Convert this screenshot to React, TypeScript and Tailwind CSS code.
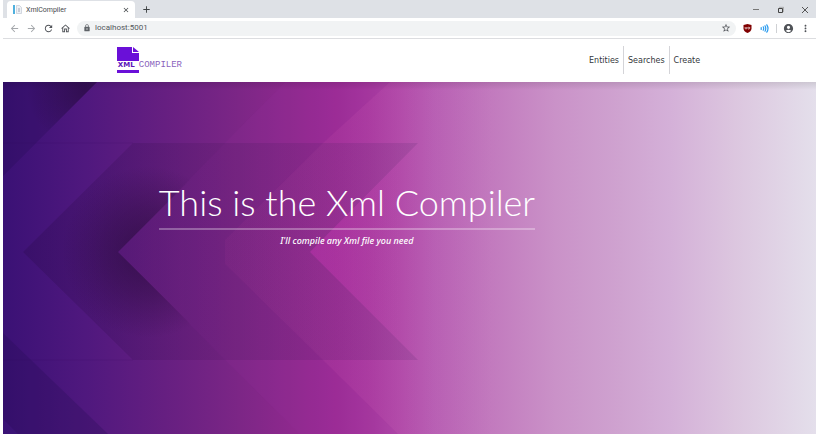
import type { ReactNode } from "react";
import {
  MdArrowBack,
  MdArrowForward,
  MdRefresh,
  MdOutlineHome,
  MdLock,
  MdStarBorder,
  MdAccountCircle,
  MdMoreVert,
  MdClose,
  MdAdd,
} from "react-icons/md";

function IconButton({ label, className = "", children }: { label: string; className?: string; children: ReactNode }) {
  return (
    <button type="button" aria-label={label} className={`flex shrink-0 items-center justify-center ${className}`}>
      {children}
    </button>
  );
}

function TabStrip() {
  return (
    <div className="flex h-[18px] items-end bg-[#dee1e6] pl-1">
      <div className="flex h-[17px] w-[128px] items-center rounded-t bg-white pr-[5px] pl-[6px]">
        <svg className="mr-1 h-[9px] w-[9px] shrink-0" viewBox="0 0 9 9" aria-hidden="true">
          <rect x="0" y="0" width="2" height="9" fill="#4fb0de" />
          <path d="M3.5 .5h3l2 2v6h-5z" fill="#eef1f5" stroke="#c3c9d4" strokeWidth=".7" />
          <path d="M5 4h2M5 6h2" stroke="#8d97a8" strokeWidth=".8" />
        </svg>
        <span className="grow font-['Roboto',sans-serif] text-[7px] leading-[10px] text-[#45494d]">XmlCompiler</span>
        <IconButton label="Close tab">
          <MdClose size={8} color="#3c4043" />
        </IconButton>
      </div>
      <IconButton label="New tab" className="ml-[6px] h-[17px]">
        <MdAdd size={11} color="#3c4043" />
      </IconButton>
      <div className="ml-auto flex h-[17px] items-center gap-[17px] pr-[7px]">
        <IconButton label="Minimise">
          <svg width="8" height="8" viewBox="0 0 8 8">
            <path d="M1 3.5h6" stroke="#777" />
          </svg>
        </IconButton>
        <IconButton label="Maximise">
          <svg width="7" height="8" viewBox="0 0 7 8">
            <path d="M1.500 2.500h4v4h-4z" fill="none" stroke="#444" />
            <path d="M2 1.300h4.600V6" fill="none" stroke="#888" strokeWidth=".6" />
          </svg>
        </IconButton>
        <IconButton label="Close window">
          <svg width="8" height="8" viewBox="0 0 8 8">
            <path d="M1 1l6 6M7 1L1 7" stroke="#444" strokeWidth=".9" />
          </svg>
        </IconButton>
      </div>
    </div>
  );
}

function Toolbar() {
  return (
    <div className="flex h-[21px] items-center border-b border-[#dcdde0] bg-white pr-[5px] pl-[6px]">
      <div className="flex gap-[6px]">
        <IconButton label="Back">
          <MdArrowBack size={11} color="#a5a8ac" />
        </IconButton>
        <IconButton label="Forward">
          <MdArrowForward size={11} color="#a5a8ac" />
        </IconButton>
        <IconButton label="Reload">
          <MdRefresh size={11} color="#505358" />
        </IconButton>
        <IconButton label="Home">
          <MdOutlineHome size={11} color="#505358" />
        </IconButton>
      </div>
      <div className="ml-[6px] flex h-[15px] grow items-center rounded-full bg-[#f1f3f4] pr-[5px] pl-[6px]">
        <MdLock size={8} color="#5f6368" />
        <input
          aria-label="Address"
          defaultValue="localhost:5001"
          className="ml-1 min-w-0 grow bg-transparent font-['Roboto',sans-serif] text-[8px] leading-[12px] text-[#54585c] outline-none"
        />
        <IconButton label="Bookmark">
          <MdStarBorder size={10} color="#505358" />
        </IconButton>
      </div>
      <IconButton label="uBlock" className="ml-[7px]">
        <svg width="9" height="9" viewBox="0 0 9 9">
          <path d="M4.5 0L8.5 1v3.500c0 2-1.700 3.500-4 4.500c-2.300-1-4-2.500-4-4.500V1z" fill="#800000" />
          <path d="M2.200 3v1.300q0 .7 .8 .7t.8-.7V3M5.800 3.200a.9.9 0 1 0 .1 0" fill="none" stroke="#fff" strokeWidth=".7" />
        </svg>
      </IconButton>
      <IconButton label="Read aloud" className="ml-[8px]">
        <svg width="9" height="9" viewBox="0 0 9 9" fill="none" stroke="#2a9bee" strokeWidth="1.200" strokeLinecap="round">
          <path d="M1.200 3.500v2M3.200 2.800q1 1.700 0 3.400M5 1.800q1.500 2.700 0 5.400M6.800 .8q2.400 3.700 0 7.400" />
        </svg>
      </IconButton>
      <span className="ml-[7px] h-[9px] w-px bg-[#cfd1d4]" />
      <IconButton label="Profile" className="ml-[6px]">
        <MdAccountCircle size={11} color="#505358" />
      </IconButton>
      <IconButton label="Menu" className="ml-[6px]">
        <MdMoreVert size={11} color="#505358" />
      </IconButton>
    </div>
  );
}

function Logo() {
  return (
    <a href="#home" className="flex items-end">
      <span className="flex w-[22px] flex-col">
        <svg className="h-[14px] w-[22px]" viewBox="0 0 22 14" aria-hidden="true">
          <path d="M0 0h15v6h7v8H0z" fill="#6a10d8" />
          <path d="M16 0l6 5h-6z" fill="#6a10d8" />
        </svg>
        <span className="pl-px font-['DejaVu_Sans',sans-serif] text-[7px] leading-[9px] font-bold text-[#5b12b8]">XML</span>
        <span className="h-[3px] bg-[#6a10d8]" />
      </span>
      <span className="mb-[3px] font-['Liberation_Mono',monospace] text-[9px] leading-[9px] text-[#8a63bd]">COMPILER</span>
    </a>
  );
}

function SiteHeader() {
  return (
    <header className="bg-white pt-[7px] pb-2">
      <div className="mx-auto flex w-[72%] items-center justify-between">
        <Logo />
        <nav className="flex divide-x divide-[#d4d4d8] font-['DejaVu_Sans',sans-serif] text-[8px] leading-[26px] text-[#34373b]">
          <a href="#entities" className="px-1 pt-[2px]">
            Entities
          </a>
          <a href="#searches" className="px-1 pt-[2px]">
            Searches
          </a>
          <a href="#create" className="pt-[2px] pr-[2px] pl-1">
            Create
          </a>
        </nav>
      </div>
    </header>
  );
}

/* Layered chevrons over a horizontal indigo-to-lilac gradient. */
function HeroBackdrop() {
  return (
    <svg className="absolute inset-0 h-full w-full" viewBox="0 0 813 352" preserveAspectRatio="none" aria-hidden="true">
      <defs>
        <linearGradient id="base" gradientUnits="userSpaceOnUse" x1="0" x2="813" y1="0" y2="0">
          <stop offset="0" stopColor="#3a1175" />
          <stop offset=".1" stopColor="#4f187e" />
          <stop offset=".2" stopColor="#661f81" />
          <stop offset=".29" stopColor="#7c2686" />
          <stop offset=".36" stopColor="#8f298e" />
          <stop offset=".41" stopColor="#9c2c95" />
          <stop offset=".45" stopColor="#a5379d" />
          <stop offset=".49" stopColor="#b04aa8" />
          <stop offset=".53" stopColor="#b75fb3" />
          <stop offset=".6" stopColor="#c27abe" />
          <stop offset=".68" stopColor="#ca92c8" />
          <stop offset=".76" stopColor="#cfa3d0" />
          <stop offset=".82" stopColor="#d4b0d8" />
          <stop offset=".9" stopColor="#dcc6df" />
          <stop offset="1" stopColor="#e4dfeb" />
        </linearGradient>
        <linearGradient id="band" gradientUnits="userSpaceOnUse" x1="20" x2="415" y1="0" y2="0">
          <stop offset="0" stopColor="#2c0a50" stopOpacity=".34" />
          <stop offset=".4" stopColor="#3a0f50" stopOpacity=".18" />
          <stop offset="1" stopColor="#5a2a70" stopOpacity=".18" />
        </linearGradient>
        <linearGradient id="fold" gradientUnits="userSpaceOnUse" x1="222" x2="500" y1="0" y2="0">
          <stop offset="0" stopColor="#b83aa8" stopOpacity=".18" />
          <stop offset=".5" stopColor="#c04cb0" stopOpacity=".22" />
          <stop offset="1" stopColor="#c878c0" stopOpacity="0" />
        </linearGradient>
        <linearGradient id="glow" gradientUnits="userSpaceOnUse" x1="307" x2="400" y1="0" y2="0">
          <stop offset="0" stopColor="#c030b0" stopOpacity=".28" />
          <stop offset="1" stopColor="#c050b0" stopOpacity="0" />
        </linearGradient>
        <radialGradient id="shade" gradientUnits="userSpaceOnUse" cx="145" cy="170" r="86">
          <stop offset="0" stopColor="#200830" stopOpacity=".6" />
          <stop offset=".5" stopColor="#260a38" stopOpacity=".34" />
          <stop offset="1" stopColor="#2a0a40" stopOpacity="0" />
        </radialGradient>
        <radialGradient id="corner" gradientUnits="userSpaceOnUse" cx="82" cy="8" r="58">
          <stop offset="0" stopColor="#200830" stopOpacity=".5" />
          <stop offset="1" stopColor="#200830" stopOpacity="0" />
        </radialGradient>
        <linearGradient id="top" x1="0" x2="0" y1="0" y2="1">
          <stop offset="0" stopColor="#000" stopOpacity=".1" />
          <stop offset="1" stopColor="#000" stopOpacity="0" />
        </linearGradient>
      </defs>
      <rect width="813" height="352" fill="url(#base)" />
      <path d="M0 0H94L0 94z" fill="#240a50" opacity=".26" />
      <path d="M0 0H94L0 94z" fill="url(#corner)" />
      <path d="M0 251L105 352H0z" fill="#240a50" opacity=".26" />
      <path d="M0 337L15 352H0z" fill="#4a1a90" opacity=".3" />
      <path d="M115 170L222 61L282 0H387L320 61L222 158V182L320 278L395 352H297L222 278z" fill="#9c30a4" opacity=".12" />
      <path d="M222 158L320 61L387 0H520V352H395L320 278L222 182z" fill="url(#fold)" />
      <path d="M307 170L415 61V278z" fill="url(#glow)" />
      <path d="M20 170L130 61H415L307 170L415 278H130z" fill="url(#band)" />
      <path d="M115 170L224 61H60V278H224z" fill="url(#shade)" />
      <path d="M0 61H130M0 278H130" stroke="#2c0a50" strokeOpacity=".1" />
      <rect width="813" height="8" fill="url(#top)" />
    </svg>
  );
}

export default function App() {
  return (
    <div className="flex min-h-screen flex-col bg-white pl-[3px] font-['Open_Sans','Noto_Sans',sans-serif]">
      <TabStrip />
      <Toolbar />
      <SiteHeader />
      <main className="relative flex grow flex-col">
        <HeroBackdrop />
        <section className="relative mx-auto w-[72%] pt-[98px] pl-[42px] text-white">
          <div className="w-[376px] max-w-full text-center">
            <h1 className="border-b-2 border-white/30 pb-1 font-['Lato',sans-serif] text-[36px] leading-[44px] font-light whitespace-nowrap">
              This is the Xml Compiler
            </h1>
            <p className="pt-[3px] font-['Noto_Sans',sans-serif] text-[9px] leading-[16px] font-medium italic">
              I'll compile any Xml file you need
            </p>
          </div>
        </section>
      </main>
    </div>
  );
}
